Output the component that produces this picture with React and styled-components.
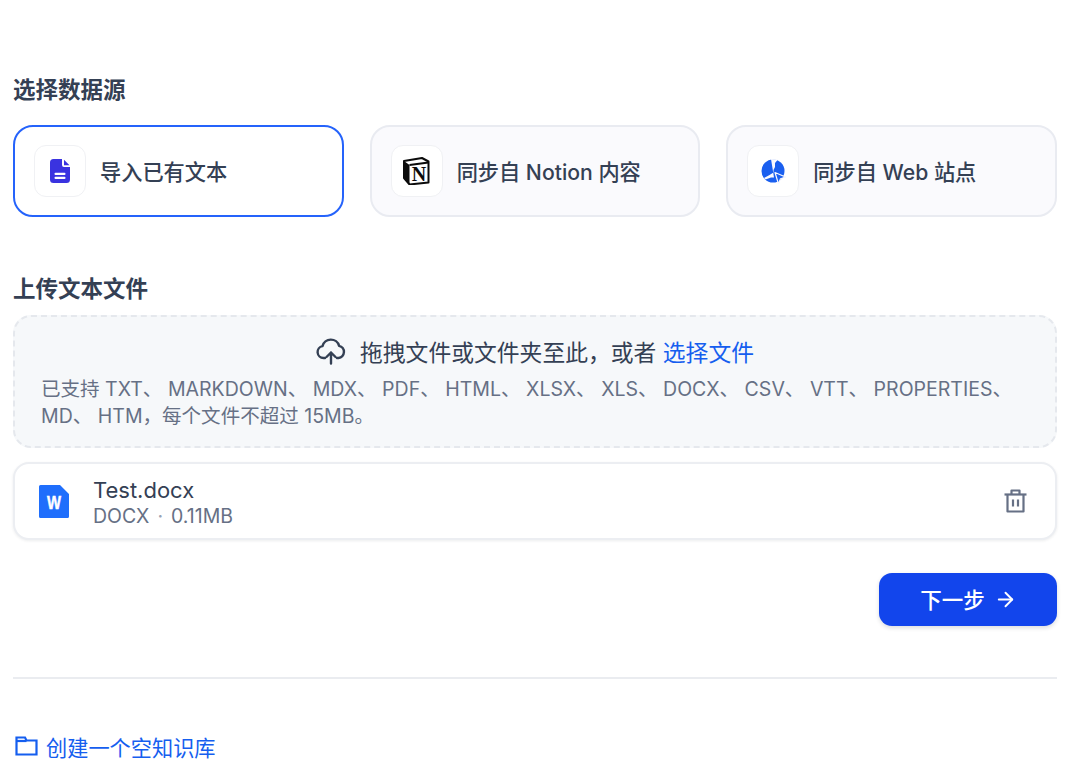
import React from 'react';
import styled, { createGlobalStyle } from 'styled-components';
import { ArrowRight } from 'lucide-react';

const GlobalStyle = createGlobalStyle`
  html, body {
    margin: 0;
    padding: 0;
    background: #fff;
    overflow: hidden;
  }
  body {
    font-family: Inter, "Noto Sans CJK SC", sans-serif;
    color: #344054;
  }
  * {
    box-sizing: border-box;
  }
`;

const DocIcon = () => (
  <svg width="20" height="24" viewBox="0 0 20 24">
    <path
      d="M3.500 0H12v6a2 2 0 0 0 2 2h6v12.500a3.500 3.500 0 0 1-3.500 3.500h-13A3.500 3.500 0 0 1 0 20.500v-17A3.500 3.500 0 0 1 3.500 0z"
      fill="#3a33e0"
    />
    <path d="M14 .8L19.500 6.300H14z" fill="#3a33e0" />
    <rect x="4.500" y="13.800" width="11" height="2.100" rx="1" fill="#fff" />
    <rect x="4.500" y="17.800" width="11" height="2.100" rx="1" fill="#fff" />
  </svg>
);

const NotionIcon = () => (
  <svg width="28" height="28" viewBox="0 0 28 28">
    <path d="M1 4L19 1 25.500 4.500V25.500L6.500 27.500 1 21z" fill="#fff" stroke="#0b0b0b" strokeWidth="2" strokeLinejoin="round" />
    <path d="M1 4L6.500 8V27.500L1 21z" fill="#0b0b0b" />
    <path d="M6.500 8L25.500 5.500" stroke="#0b0b0b" strokeWidth="2" fill="none" />
    <text
      x="16"
      y="24"
      textAnchor="middle"
      fontFamily="'Liberation Serif', serif"
      fontWeight="700"
      fontSize="20"
      fill="#0b0b0b"
    >
      N
    </text>
  </svg>
);

const GlobeIcon = () => (
  <svg width="25" height="25" viewBox="0 0 25 25">
    <circle cx="12" cy="12" r="11.500" fill="#1a5fef" />
    <path d="M10 0L17 .5 14 4 14 8 12.500 11 12.500 13.500 8.500 16 3 19 4.500 20.500 10 18.500 13 18.500z" fill="#faf9fd" />
    <path d="M14 13.500L24.500 18 19.500 19.800 17.500 25z" fill="#1a5fef" stroke="#faf9fd" strokeWidth="1.200" strokeLinejoin="round" />
  </svg>
);

const CloudIcon = () => (
  <svg width="30" height="28" viewBox="0 0 30 28" fill="none" stroke="#344054" strokeWidth="2.400" strokeLinecap="round" strokeLinejoin="round">
    <path d="M9 21H7.500a6 6 0 0 1-1-11.900 8.600 8.600 0 0 1 16.600-.3A6.200 6.200 0 0 1 22.500 21H21" />
    <path d="M15 26.500V15.500M10.500 20l4.500-4.500 4.500 4.500" />
  </svg>
);

const WordIcon = () => (
  <svg width="30" height="33" viewBox="0 0 30 33">
    <path d="M1.500 0H21l9 9v22.500a1.500 1.500 0 0 1-1.500 1.500h-27A1.500 1.500 0 0 1 0 31.500v-30A1.500 1.500 0 0 1 1.500 0z" fill="#1f6efc" />
    <text
      x="8"
      y="23.500"
      fontFamily="'Liberation Sans', sans-serif"
      fontWeight="700"
      fontSize="19"
      textLength="14"
      lengthAdjust="spacingAndGlyphs"
      fill="#fff"
      stroke="#fff"
      strokeWidth="0.500"
    >
      W
    </text>
  </svg>
);

const TrashIcon = () => (
  <svg width="23" height="24" viewBox="0 0 22 24" fill="none" stroke="#667085" strokeWidth="2.200" strokeLinejoin="round">
    <path d="M0 5.500h22" />
    <path d="M7 5V1.500h8V5" />
    <path d="M3 5.500V22.500h16V5.500" />
    <path d="M8.500 10.500v7M13.500 10.500v7" />
  </svg>
);

const FolderIcon = () => (
  <svg width="23" height="20" viewBox="0 0 23 20" fill="none" stroke="#155eef" strokeWidth="2.200" strokeLinejoin="miter">
    <path d="M1.500 1.500h8.500l1.500 3h10v14h-20z" />
    <path d="M1.500 5h10" />
  </svg>
);

const sources = [
  { label: '导入已有文本', icon: <DocIcon />, active: true },
  { label: '同步自 Notion 内容', icon: <NotionIcon /> },
  { label: '同步自 Web 站点', icon: <GlobeIcon /> },
];

const App = () => (
  <>
    <GlobalStyle />
    <Page>
      <SectionTitle>选择数据源</SectionTitle>
      <SourceRow>
        {sources.map((s) => (
          <SourceCard key={s.label} $active={s.active}>
            <IconTile>{s.icon}</IconTile>
            <SourceLabel>{s.label}</SourceLabel>
          </SourceCard>
        ))}
      </SourceRow>

      <UploadTitle>上传文本文件</UploadTitle>
      <DropZone>
        <DropLine>
          <CloudIcon />
          <span>
            拖拽文件或文件夹至此，或者 <Link>选择文件</Link>
          </span>
        </DropLine>
        <DropTip>
          已支持 TXT、 MARKDOWN、 MDX、 PDF、 HTML、 XLSX、 XLS、 DOCX、 CSV、 VTT、 PROPERTIES、 MD、 HTM，每个文件不超过 15MB。
        </DropTip>
      </DropZone>

      <FileCard>
        <WordIcon />
        <FileInfo>
          <FileName>Test.docx</FileName>
          <FileMeta>
            DOCX<MetaDot>·</MetaDot>0.11MB
          </FileMeta>
        </FileInfo>
        <TrashIcon />
      </FileCard>

      <Actions>
        <NextButton>
          <NextLabel>下一步</NextLabel>
          <ArrowRight size={23} strokeWidth={2} />
        </NextButton>
      </Actions>

      <Divider />

      <CreateLink>
        <FolderIcon />
        <span>创建一个空知识库</span>
      </CreateLink>
    </Page>
  </>
);

const Page = styled.div`
  width: 1080px;
  height: 770px;
  padding: 75px 23px 0 13px;
  overflow: hidden;
`;

const SectionTitle = styled.h2`
  margin: 0;
  height: 30px;
  font-size: 22.500px;
  line-height: 30px;
  font-weight: 600;
  color: #344054;
`;

const SourceRow = styled.div`
  display: grid;
  grid-template-columns: repeat(3, 1fr);
  column-gap: 26px;
  margin-top: 20px;
`;

const SourceCard = styled.div`
  display: flex;
  align-items: center;
  gap: 14px;
  height: 92px;
  padding: 0 19px;
  border-radius: 20px;
  border: 2px solid ${(p) => (p.$active ? '#2563fb' : '#e9ebf1')};
  background: ${(p) => (p.$active ? '#fff' : '#fafafd')};
`;

const IconTile = styled.div`
  width: 52px;
  height: 52px;
  flex: none;
  display: flex;
  align-items: center;
  justify-content: center;
  background: #fff;
  border: 1px solid #f0f1f4;
  border-radius: 12px;
`;

const SourceLabel = styled.span`
  padding-bottom: 2px;
  font-size: 21.200px;
  font-weight: 500;
  color: #344054;
`;

const UploadTitle = styled(SectionTitle)`
  margin-top: 57px;
`;

const DropZone = styled.div`
  margin-top: 11px;
  height: 133px;
  padding: 18px 26px 0;
  background: #f6f8fa;
  border: 2px dashed #e5e8ed;
  border-radius: 18px;
`;

const DropLine = styled.div`
  display: flex;
  align-items: center;
  justify-content: center;
  gap: 14px;
  height: 32px;
  font-size: 22.800px;
  color: #344054;
`;

const Link = styled.span`
  color: #155eef;
`;

const DropTip = styled.div`
  margin-top: 9px;
  font-size: 19.550px;
  line-height: 27px;
  color: #667085;
`;

const FileCard = styled.div`
  display: flex;
  align-items: center;
  margin-top: 14px;
  height: 78px;
  padding: 0 28px 0 24px;
  background: #fff;
  border: 2px solid #eceef2;
  border-radius: 16px;
  box-shadow: 0 1px 3px rgba(16, 24, 40, 0.08);
`;

const FileInfo = styled.div`
  flex: 1;
  margin-left: 24px;
  padding-top: 2px;
`;

const FileName = styled.div`
  font-size: 22px;
  line-height: 28px;
  color: #344054;
`;

const FileMeta = styled.div`
  font-size: 19.500px;
  line-height: 24px;
  color: #667085;
`;

const MetaDot = styled.span`
  margin: 0 8px;
  color: #98a2b3;
`;

const Actions = styled.div`
  display: flex;
  justify-content: flex-end;
  margin-top: 33px;
`;

const NextButton = styled.button`
  display: flex;
  align-items: center;
  justify-content: center;
  gap: 9px;
  width: 178px;
  height: 53px;
  padding: 0 0 0 1px;
  border: none;
  border-radius: 13px;
  background: #1245ec;
  color: #fff;
  font-family: inherit;
  font-size: 21.500px;
  font-weight: 500;
  box-shadow: 0 2px 4px rgba(16, 24, 40, 0.15);
`;

const NextLabel = styled.span`
  margin-top: -3px;
`;

const Divider = styled.div`
  margin-top: 51px;
  height: 2px;
  background: #eaecf0;
`;

const CreateLink = styled.div`
  display: flex;
  align-items: center;
  gap: 8px;
  margin-top: 52px;
  margin-left: 2px;
  height: 30px;
  font-size: 21.200px;
  color: #155eef;
`;

export default App;
